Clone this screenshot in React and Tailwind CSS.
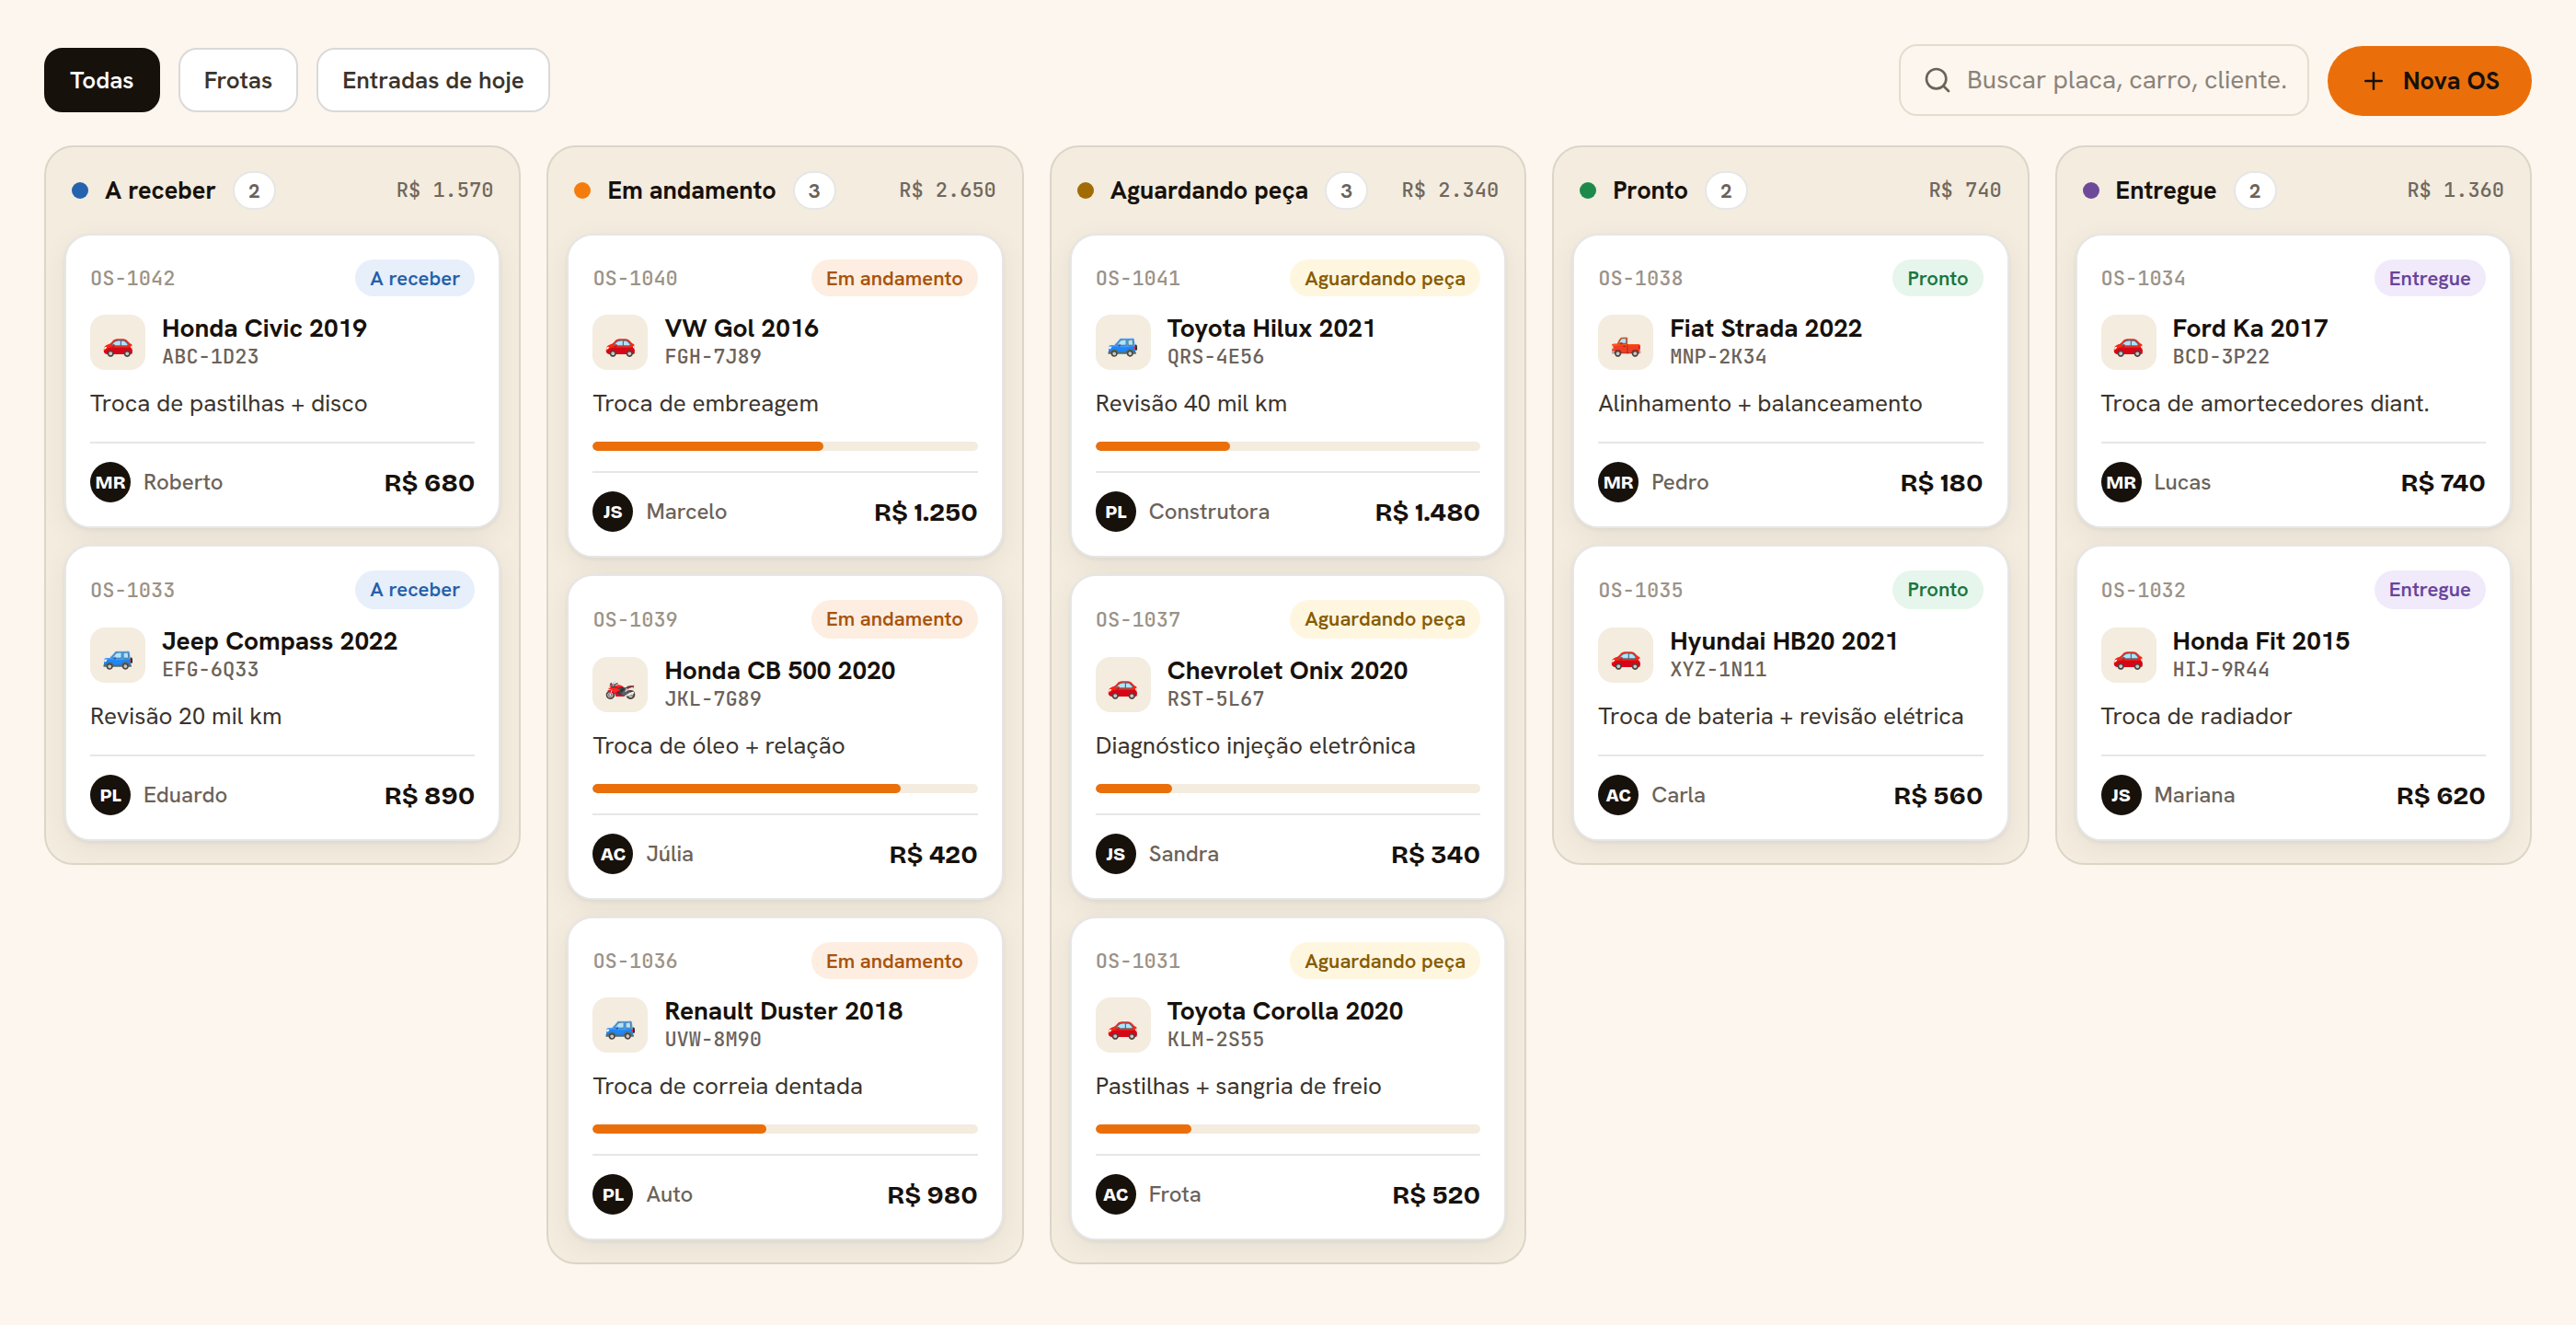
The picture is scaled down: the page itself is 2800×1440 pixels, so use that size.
import React from "react";
import { Search, Plus } from "lucide-react";

const STATUS = {
  receber: { label: "A receber", dot: "bg-[#2563ae]", badge: "bg-[#e7effb] text-[#2560a8]" },
  andamento: { label: "Em andamento", dot: "bg-[#f57c0c]", badge: "bg-[#fdeee1] text-[#a9530c]" },
  peca: { label: "Aguardando peça", dot: "bg-[#a16c03]", badge: "bg-[#fff6e0] text-[#865c04]" },
  pronto: { label: "Pronto", dot: "bg-[#1d8a4b]", badge: "bg-[#e6f6ec] text-[#1b7540]" },
  entregue: { label: "Entregue", dot: "bg-[#6d4a99]", badge: "bg-[#f0eafa] text-[#68449a]" },
};

const COLUMNS = [
  { status: "receber", total: "R$ 1.570", cards: [
    { id: "OS-1042", icon: "🚗", name: "Honda Civic 2019", plate: "ABC-1D23", service: "Troca de pastilhas + disco", tech: "MR", client: "Roberto", price: "R$ 680" },
    { id: "OS-1033", icon: "🚙", name: "Jeep Compass 2022", plate: "EFG-6Q33", service: "Revisão 20 mil km", tech: "PL", client: "Eduardo", price: "R$ 890" },
  ] },
  { status: "andamento", total: "R$ 2.650", cards: [
    { id: "OS-1040", icon: "🚗", name: "VW Gol 2016", plate: "FGH-7J89", service: "Troca de embreagem", progress: 60, tech: "JS", client: "Marcelo", price: "R$ 1.250" },
    { id: "OS-1039", icon: "🏍️", name: "Honda CB 500 2020", plate: "JKL-7G89", service: "Troca de óleo + relação", progress: 80, tech: "AC", client: "Júlia", price: "R$ 420" },
    { id: "OS-1036", icon: "🚙", name: "Renault Duster 2018", plate: "UVW-8M90", service: "Troca de correia dentada", progress: 45, tech: "PL", client: "Auto", price: "R$ 980" },
  ] },
  { status: "peca", total: "R$ 2.340", cards: [
    { id: "OS-1041", icon: "🚙", name: "Toyota Hilux 2021", plate: "QRS-4E56", service: "Revisão 40 mil km", progress: 35, tech: "PL", client: "Construtora", price: "R$ 1.480" },
    { id: "OS-1037", icon: "🚗", name: "Chevrolet Onix 2020", plate: "RST-5L67", service: "Diagnóstico injeção eletrônica", progress: 20, tech: "JS", client: "Sandra", price: "R$ 340" },
    { id: "OS-1031", icon: "🚗", name: "Toyota Corolla 2020", plate: "KLM-2S55", service: "Pastilhas + sangria de freio", progress: 25, tech: "AC", client: "Frota", price: "R$ 520" },
  ] },
  { status: "pronto", total: "R$ 740", cards: [
    { id: "OS-1038", icon: "🛻", name: "Fiat Strada 2022", plate: "MNP-2K34", service: "Alinhamento + balanceamento", tech: "MR", client: "Pedro", price: "R$ 180" },
    { id: "OS-1035", icon: "🚗", name: "Hyundai HB20 2021", plate: "XYZ-1N11", service: "Troca de bateria + revisão elétrica", tech: "AC", client: "Carla", price: "R$ 560" },
  ] },
  { status: "entregue", total: "R$ 1.360", cards: [
    { id: "OS-1034", icon: "🚗", name: "Ford Ka 2017", plate: "BCD-3P22", service: "Troca de amortecedores diant.", tech: "MR", client: "Lucas", price: "R$ 740" },
    { id: "OS-1032", icon: "🚗", name: "Honda Fit 2015", plate: "HIJ-9R44", service: "Troca de radiador", tech: "JS", client: "Mariana", price: "R$ 620" },
  ] },
];

const MONO = "font-['JetBrains_Mono','Liberation_Mono',monospace] font-medium";
const DISPLAY = "font-['Bricolage_Grotesque','Inter',sans-serif]";

function Card({ card, status }) {
  return (
    <article className="group rounded-[28px] border-2 border-[#e6e6e6] bg-white p-[26px] shadow-[0_2px_4px_rgba(23,17,10,0.05),0_8px_32px_rgba(23,17,10,0.06)]">
      <div className="flex h-10 items-center justify-between group-even:h-[42px] group-even:pb-0">
        <span className={`${MONO} text-[22px] text-[#9b9287]`}>{card.id}</span>
        <span className={`flex h-full items-center rounded-full px-4 text-[22px] font-semibold group-even:pb-0.5 ${STATUS[status].badge}`}>
          {STATUS[status].label}
        </span>
      </div>
      <div className="mt-5 flex h-[60px] items-start gap-[18px]">
        <span className="flex size-[60px] shrink-0 items-center justify-center rounded-2xl bg-[#f3ecdf] text-[28px]">{card.icon}</span>
        <div>
          <div className="text-[28px] leading-[29px] font-bold text-[#17110c]">{card.name}</div>
          <div className={`${MONO} text-[22px] leading-[34px] text-[#6b6259]`}>{card.plate}</div>
        </div>
      </div>
      <p className="mt-[19px] mb-[25px] text-[26px] leading-[34px] text-[#3b342c]">{card.service}</p>
      {card.progress != null && (
        <div className="mb-[22px] h-2.5 overflow-hidden rounded-full bg-[#f3ecdf]">
          <div className="h-full rounded-full bg-[#ea6f0b]" style={{ width: `${card.progress}%` }} />
        </div>
      )}
      <div className="flex items-center border-t-2 border-[#e6e6e6] pt-5">
        <span className={`${DISPLAY} flex size-11 items-center justify-center rounded-full bg-[#17110c] pb-px text-[20px] font-extrabold text-white [font-variation-settings:'opsz'_12]`}>{card.tech}</span>
        <span className="ml-3.5 text-[24px] leading-[36px] font-medium text-[#6b6259]">{card.client}</span>
        <span className={`${DISPLAY} ml-auto pt-px text-[28px] leading-[36px] font-bold text-[#17110c] [font-variation-settings:'opsz'_14]`}>{card.price}</span>
      </div>
    </article>
  );
}

function Column({ column }) {
  const s = STATUS[column.status];
  return (
    <section className="rounded-[32px] border-2 border-[#dbd6c8] bg-[#f3ecdf] px-5 pb-6">
      <header className="flex h-[94px] items-center px-2">
        <span className={`size-[18px] rounded-full ${s.dot}`} />
        <h2 className="ml-[18px] text-[27px] font-bold text-[#17110c]">{s.label}</h2>
        <span className="ml-[18px] flex h-[42px] w-[47px] items-center justify-center rounded-full border-2 border-[#e6e6e6] bg-white text-[22px] font-bold text-[#6b6259]">
          {column.cards.length}
        </span>
        <span className={`${MONO} ml-auto pb-0.5 text-[22px] text-[#70675d]`}>{column.total}</span>
      </header>
      <div className="flex flex-col gap-[18px]">
        {column.cards.map((c) => (
          <Card key={c.id} card={c} status={column.status} />
        ))}
      </div>
    </section>
  );
}

export default function App() {
  return (
    <div className="min-h-[1440px] bg-[#fdf6ee] px-12 pt-12 font-['Hanken_Grotesk','Roboto',sans-serif]">
      <div className="flex h-[78px] items-center gap-5">
        <button className="h-[70px] w-[126px] rounded-[20px] border-2 border-[#17110c] bg-[#17110c] text-[26px] font-semibold text-white">Todas</button>
        <button className="h-[70px] w-[130px] rounded-[20px] border-2 border-[#d9d9d9] bg-white text-[26px] font-semibold text-[#3b342c]">Frotas</button>
        <button className="h-[70px] w-[254px] rounded-[20px] border-2 border-[#d9d9d9] bg-white text-[26px] font-semibold text-[#3b342c]">Entradas de hoje</button>
        <label className="ml-auto flex h-[78px] w-[446px] items-center gap-4 rounded-[20px] border-2 border-[#e3ddd0] pl-6 text-[28px] text-[#8b8379]">
          <Search className="size-8 shrink-0 text-[#6b6259]" strokeWidth={2} />
          <span className="pb-0.5 whitespace-nowrap">Buscar placa, carro, cliente.</span>
        </label>
        <button className="mt-0.5 flex h-[76px] w-[222px] items-center justify-center gap-[17px] rounded-full bg-[#ea6f0b] text-[27px] font-bold text-[#17110c]">
          <Plus className="size-[30px]" strokeWidth={2} />
          Nova OS
        </button>
      </div>
      <main className="mt-8 grid grid-cols-5 items-start gap-7">
        {COLUMNS.map((c) => (
          <Column key={c.status} column={c} />
        ))}
      </main>
    </div>
  );
}
